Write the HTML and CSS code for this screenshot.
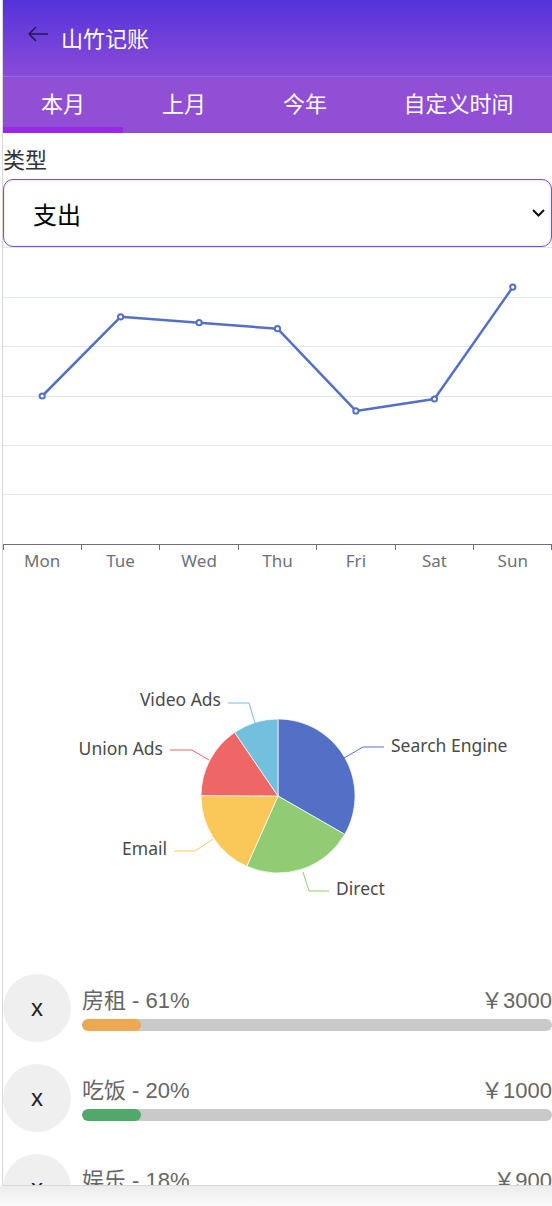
FILE: index.html
```html
<!DOCTYPE html>
<html lang="zh-CN">
<head>
<meta charset="UTF-8">
<meta name="viewport" content="width=device-width, initial-scale=1.0">
<title>山竹记账</title>
<link rel="stylesheet" href="styles.css">
</head>
<body>
<div class="app">
    <div class="header">
        <svg class="back" width="22" height="22" viewBox="0 0 22 22">
            <path d="M2 11 H21 M2 11 L9 4 M2 11 L9 18" fill="none" stroke="#1f1a4d" stroke-width="1.5"/>
        </svg>
        <span class="title">山竹记账</span>
    </div>
    <div class="tabs">
        <div class="tab active">本月</div>
        <div class="tab tab-mid">上月</div>
        <div class="tab">今年</div>
        <div class="tab tab-last">自定义时间</div>
    </div>

    <div class="label">类型</div>
    <div class="select">
        <span>支出</span>
        <svg width="13" height="8" viewBox="0 0 13 8">
            <path d="M1 1 L6.5 6.5 L12 1" fill="none" stroke="#111" stroke-width="2"/>
        </svg>
    </div>

    <!-- line chart, coords match the page -->
    <svg class="chart" width="549" height="350" viewBox="3 247 549 350">
        <g stroke="#e0e6f1" stroke-width="1">
            <line x1="3" y1="247.5" x2="552" y2="247.5"/>
            <line x1="3" y1="297.5" x2="552" y2="297.5"/>
            <line x1="3" y1="346.5" x2="552" y2="346.5"/>
            <line x1="3" y1="396.5" x2="552" y2="396.5"/>
            <line x1="3" y1="445.5" x2="552" y2="445.5"/>
            <line x1="3" y1="494.5" x2="552" y2="494.5"/>
        </g>
        <g stroke="#6e7079" stroke-width="1">
            <line x1="3" y1="544.5" x2="552" y2="544.5"/>
            <line x1="3.5" y1="544" x2="3.5" y2="550"/>
            <line x1="81.5" y1="544" x2="81.5" y2="550"/>
            <line x1="159.5" y1="544" x2="159.5" y2="550"/>
            <line x1="238.5" y1="544" x2="238.5" y2="550"/>
            <line x1="316.5" y1="544" x2="316.5" y2="550"/>
            <line x1="395.5" y1="544" x2="395.5" y2="550"/>
            <line x1="473.5" y1="544" x2="473.5" y2="550"/>
            <line x1="551.5" y1="544" x2="551.5" y2="550"/>
        </g>
        <g class="axis-text" text-anchor="middle">
            <text x="42.2" y="567">Mon</text>
            <text x="120.6" y="567">Tue</text>
            <text x="199.1" y="567">Wed</text>
            <text x="277.5" y="567">Thu</text>
            <text x="355.9" y="567">Fri</text>
            <text x="434.4" y="567">Sat</text>
            <text x="512.8" y="567">Sun</text>
        </g>
        <polyline points="42.2,396 120.6,316.8 199.1,322.7 277.5,328.7 355.9,410.9 434.4,399 512.8,287.1"
                  fill="none" stroke="#5470c6" stroke-width="2.5" stroke-linejoin="round"/>
        <g fill="#fff" stroke="#5470c6" stroke-width="2">
            <circle cx="42.2" cy="396" r="2.6"/>
            <circle cx="120.6" cy="316.8" r="2.6"/>
            <circle cx="199.1" cy="322.7" r="2.6"/>
            <circle cx="277.5" cy="328.7" r="2.6"/>
            <circle cx="355.9" cy="410.9" r="2.6"/>
            <circle cx="434.4" cy="399" r="2.6"/>
            <circle cx="512.8" cy="287.1" r="2.6"/>
        </g>
    </svg>

    <!-- pie chart -->
    <svg class="chart" width="549" height="363" viewBox="3 597 549 363">
        <g stroke="#fff" stroke-width="0.7" stroke-linejoin="round">
            <path d="M278 796 L278 719 A77 77 0 0 1 344.76 834.37 Z" fill="#5470c6"/>
            <path d="M278 796 L344.76 834.37 A77 77 0 0 1 246.72 866.36 Z" fill="#91cc75"/>
            <path d="M278 796 L246.72 866.36 A77 77 0 0 1 201 795.57 Z" fill="#fac858"/>
            <path d="M278 796 L201 795.57 A77 77 0 0 1 234.59 732.4 Z" fill="#ee6666"/>
            <path d="M278 796 L234.59 732.4 A77 77 0 0 1 278 719 Z" fill="#73c0de"/>
        </g>
        <g fill="none" stroke-width="1">
            <polyline points="344,758 363,747 384,747" stroke="#5470c6"/>
            <polyline points="303,872 309,891 329,891" stroke="#91cc75"/>
            <polyline points="213,839 195,851 174,851" stroke="#fac858"/>
            <polyline points="209,760 192,750 170,750" stroke="#ee6666"/>
            <polyline points="255,723 249,703 228,703" stroke="#73c0de"/>
        </g>
        <g class="pie-text">
            <text x="391" y="752">Search Engine</text>
            <text x="336" y="895">Direct</text>
            <text x="167" y="855" text-anchor="end">Email</text>
            <text x="163" y="755" text-anchor="end">Union Ads</text>
            <text x="221" y="706" text-anchor="end">Video Ads</text>
        </g>
    </svg>

    <div class="list">
        <div class="item">
            <div class="icon">x</div>
            <div class="info">
                <div class="row"><span>房租 - 61%</span><span>￥3000</span></div>
                <div class="bar"><div class="fill orange" style="width: 12.5%"></div></div>
            </div>
        </div>
        <div class="item">
            <div class="icon">x</div>
            <div class="info">
                <div class="row"><span>吃饭 - 20%</span><span>￥1000</span></div>
                <div class="bar"><div class="fill green" style="width: 12.5%"></div></div>
            </div>
        </div>
        <div class="item">
            <div class="icon">x</div>
            <div class="info">
                <div class="row"><span>娱乐 - 18%</span><span>￥900</span></div>
                <div class="bar"><div class="fill blue" style="width: 12.5%"></div></div>
            </div>
        </div>
    </div>
</div>
<div class="foot"></div>
</body>
</html>
```

FILE: styles.css
```css
body {
    margin: 0;
    background: #fff;
    font-family: "Liberation Sans", "Noto Sans CJK SC", sans-serif;
}
.app {
    margin-left: 2px;
    width: 549px;
    height: 1185px;
    border-left: 1px solid #d9d9d9;
    border-bottom: 1px solid #d9d9d9;
    overflow: hidden;
}
.foot {
    height: 20px;
    background: linear-gradient(#ececec, #fbfbfb);
}
.header {
    height: 77px;
    box-sizing: border-box;
    display: flex;
    align-items: center;
    padding: 0 0 3px 24px;
    background: linear-gradient(#5533db, #8a4bd8);
    border-bottom: 1px solid rgba(255, 255, 255, 0.3);
}
.back {
    margin: 0 12px 6px 0;
}
.title {
    color: #fff;
    font-family: "Noto Sans CJK SC", sans-serif;
    font-size: 22px;
}
.tabs {
    display: flex;
    height: 56px;
    background-color: #914fd6;
}
.tab {
    width: 120px;
    box-sizing: border-box;
    border-bottom: 6px solid transparent;
    display: flex;
    align-items: center;
    justify-content: center;
    color: #fff;
    font-family: "Noto Sans CJK SC", sans-serif;
    font-size: 22px;
}
.tab-mid {
    width: 122px;
}
.tab-last {
    flex: 1;
}
.tab.active {
    border-bottom-color: #9a26e6;
}
.label {
    margin-top: 10px;
    line-height: 30px;
    padding-bottom: 2px;
    font-family: "Noto Sans CJK SC", sans-serif;
    font-size: 22px;
    color: #333;
}
.select {
    margin-top: 4px;
    height: 68px;
    box-sizing: border-box;
    border: 1px solid #7650d8;
    border-radius: 10px;
    box-shadow: inset 0 0 3px rgba(0, 0, 0, 0.15);
    display: flex;
    align-items: center;
    justify-content: space-between;
    padding: 0 6px 0 29px;
    font-family: "Noto Sans CJK SC", sans-serif;
    font-size: 24px;
    color: #000;
}
.chart {
    display: block;
}
.axis-text {
    font-family: "Noto Sans", sans-serif;
    font-size: 17px;
    fill: #6e7079;
}
.pie-text {
    font-family: "Noto Sans", sans-serif;
    font-size: 17.5px;
    fill: #4a4a4a;
}
.list {
    margin-top: 14px;
}
.item {
    display: flex;
    align-items: center;
    height: 68px;
    margin-bottom: 22px;
}
.icon {
    width: 68px;
    height: 68px;
    flex-shrink: 0;
    border-radius: 50%;
    background-color: #efefef;
    display: flex;
    align-items: center;
    justify-content: center;
    font-size: 24px;
    color: #222;
}
.info {
    flex: 1;
    margin-left: 11px;
}
.row {
    display: flex;
    justify-content: space-between;
    font-size: 22px;
    line-height: 26px;
    padding-top: 2px;
    color: #666;
}
.bar {
    margin-top: 5px;
    height: 12px;
    border-radius: 6px;
    background-color: #c9c9c9;
    overflow: hidden;
}
.fill {
    height: 100%;
    border-radius: 6px;
}
.orange {
    background-color: #eca853;
}
.green {
    background-color: #52a86b;
}
.blue {
    background-color: #5b8bd6;
}
```
